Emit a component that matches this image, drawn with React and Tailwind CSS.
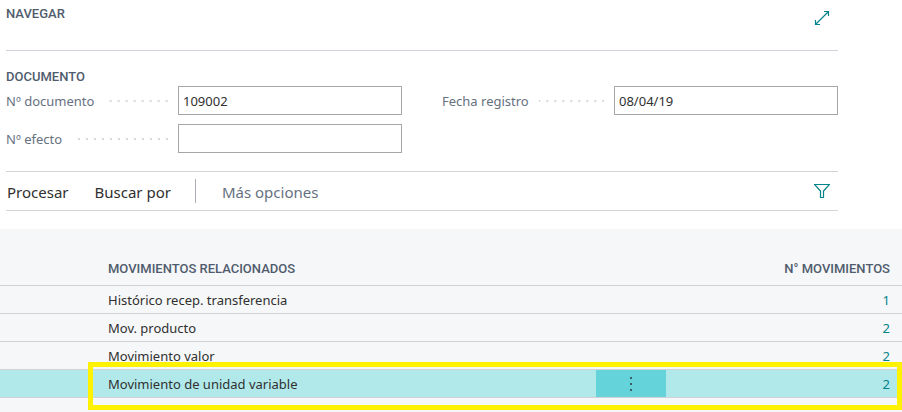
import { useState } from "react";

const rows = [
  { name: "Histórico recep. transferencia", count: 1 },
  { name: "Mov. producto", count: 2 },
  { name: "Movimiento valor", count: 2 },
  { name: "Movimiento de unidad variable", count: 2, selected: true },
];

function Field({ id, label, value }) {
  const [text, setText] = useState(value);

  return (
    <div className="flex items-center">
      <div className="flex flex-1 items-center pr-2.5">
        <label htmlFor={id} className="text-[13px] leading-5 text-[#66717f]">{label}</label>
        <span className="ml-2.5 h-0.5 flex-1 bg-[linear-gradient(90deg,transparent_6px,#d6d8db_6px)] bg-[length:8px_2px] bg-right" />
      </div>
      <input
        id={id}
        value={text}
        onChange={e => setText(e.target.value)}
        className="h-[29px] w-56 border border-[#a6a6a6] bg-white px-1 text-[13px] text-[#303030] outline-none"
      />
    </div>
  );
}

export default function App() {
  return (
    <div className="bg-white font-['Noto_Sans',sans-serif] text-[#303030]">
      <div className="pr-16 pl-1.5">
        <header className="flex h-[51px] items-start justify-between border-b border-[#d2d2dc] pt-1">
          <h1 className="font-[Roboto,sans-serif] text-[13px] leading-5 font-medium text-[#505c6d]">NAVEGAR</h1>
          <button aria-label="Expandir" className="mt-1.5 mr-2 text-[#00838a]">
            <svg width="16" height="16" viewBox="0 0 16 16" fill="none" stroke="currentColor" strokeWidth="1.2">
              <path d="M1.5 14.5L14.5 1.5M10 1.5H14.5V6M1.5 10V14.5H6" />
            </svg>
          </button>
        </header>

        <section className="pt-4">
          <h2 className="font-[Roboto,sans-serif] text-[13px] leading-5 font-medium text-[#505c6d]">DOCUMENTO</h2>
          <div className="mt-[-1px] grid grid-cols-2 gap-x-10 gap-y-[9px]">
            <Field id="documento" label="Nº documento" value="109002" />
            <Field id="fecha" label="Fecha registro" value="08/04/19" />
            <Field id="efecto" label="Nº efecto" value="" />
          </div>
        </section>

        <nav className="mt-[18px] flex h-10 items-center border-y border-[#d4d5d8] text-[15px]">
          <button className="pt-0.5 pl-px">Procesar</button>
          <button className="ml-[26px] pt-0.5">Buscar por</button>
          <span className="ml-6 h-6 w-px bg-[#a9aeb7]" />
          <button className="ml-[26px] pt-0.5 text-[#66717f]">Más opciones</button>
          <button aria-label="Filtrar" className="mr-2 ml-auto text-[#00838a]">
            <svg width="16" height="16" viewBox="0 0 16 16" fill="none" stroke="currentColor" strokeWidth="1.2">
              <path d="M0.5 1.5H15.5L9.5 8V14.5H6.5V8Z" />
            </svg>
          </button>
        </nav>
      </div>

      <div className="relative mt-[18px] bg-[#f6f7f9] pb-3.5">
        <table className="w-full table-fixed border-separate border-spacing-0 text-[13px] leading-5">
          <colgroup>
            <col className="w-[108px]" />
            <col />
            <col className="w-[70px]" />
            <col className="w-[236px]" />
          </colgroup>
          <thead>
            <tr className="h-[57px] align-bottom font-[Roboto,sans-serif] text-[#505c6d]">
              <td className="border-b border-[#d0d2d5]" />
              <th className="border-b border-[#d0d2d5] pb-1.5 text-left font-medium">MOVIMIENTOS RELACIONADOS</th>
              <td className="border-b border-[#d0d2d5]" />
              <th className="border-b border-[#d0d2d5] pr-3 pb-1.5 text-right font-medium">N° MOVIMIENTOS</th>
            </tr>
          </thead>
          <tbody>
            {rows.map(row => (
              <tr key={row.name} className={row.selected ? "h-7 bg-[#b1e9eb]" : "h-7"}>
                <td className="border-b border-[#d0d2d5]" />
                <td className="border-b border-[#d0d2d5]">{row.name}</td>
                <td className={row.selected ? "border-b border-[#d0d2d5] bg-[#65d3da]" : "border-b border-[#d0d2d5]"}>
                  {row.selected && (
                    <button aria-label="Más acciones" className="flex h-5 w-full items-center justify-center text-[#3b5f66]">
                      <svg width="2" height="14" viewBox="0 0 2 14" fill="currentColor">
                        <path d="M0 0H2V2H0ZM0 6H2V8H0ZM0 12H2V14H0Z" />
                      </svg>
                    </button>
                  )}
                </td>
                <td className="border-b border-[#d0d2d5] pr-3 text-right">
                  <a href="#movimientos" className="text-[#00838a]">{row.count}</a>
                </td>
              </tr>
            ))}
          </tbody>
        </table>
        <div className="pointer-events-none absolute right-0 bottom-0.5 left-[88px] h-12 border-5 border-[#fff200]" />
      </div>
    </div>
  );
}
